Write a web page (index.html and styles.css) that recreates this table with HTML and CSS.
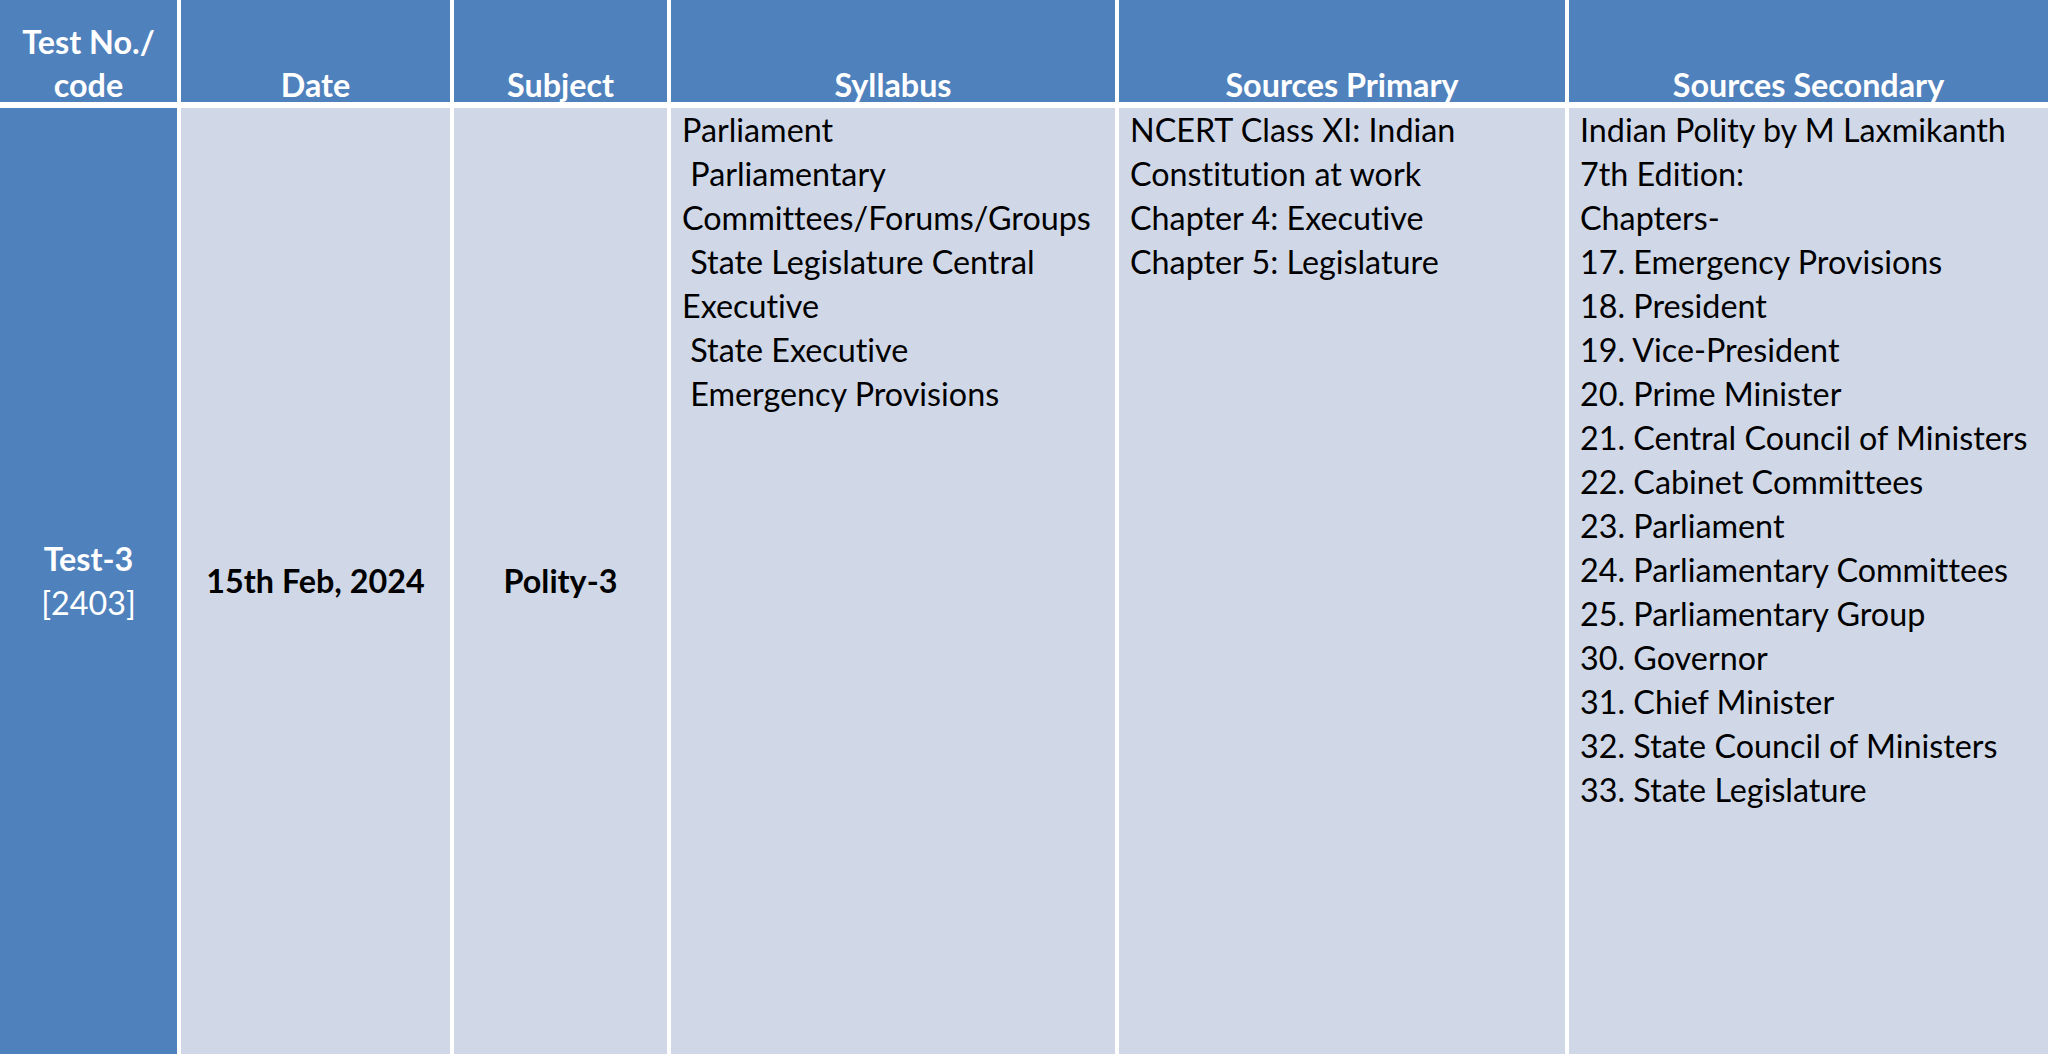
FILE: index.html
```html
<!DOCTYPE html>
<html lang="en">
<head>
<meta charset="utf-8">
<title>Test Schedule</title>
<link rel="stylesheet" href="styles.css">
</head>
<body>
<div class="table">
  <div class="th"><div class="th-text">Test No./<br>code</div></div>
  <div class="th"><div class="th-text">Date</div></div>
  <div class="th"><div class="th-text">Subject</div></div>
  <div class="th"><div class="th-text">Syllabus</div></div>
  <div class="th"><div class="th-text">Sources Primary</div></div>
  <div class="th"><div class="th-text">Sources Secondary</div></div>

  <div class="td td-key"><div><span class="key-b">Test-3</span><br><span class="key-r">[2403]</span></div></div>
  <div class="td td-center"><div>15th Feb, 2024</div></div>
  <div class="td td-center"><div>Polity-3</div></div>
  <div class="td td-list">
    <div class="ln">Parliament</div>
    <div class="ln"> Parliamentary</div>
    <div class="ln">Committees/Forums/Groups</div>
    <div class="ln"> State Legislature Central</div>
    <div class="ln">Executive</div>
    <div class="ln"> State Executive</div>
    <div class="ln"> Emergency Provisions</div>
  </div>
  <div class="td td-list">
    <div class="ln">NCERT Class XI: Indian</div>
    <div class="ln">Constitution at work</div>
    <div class="ln">Chapter 4: Executive</div>
    <div class="ln">Chapter 5: Legislature</div>
  </div>
  <div class="td td-list">
    <div class="ln">Indian Polity by M Laxmikanth</div>
    <div class="ln">7th Edition:</div>
    <div class="ln">Chapters-</div>
    <div class="ln">17. Emergency Provisions</div>
    <div class="ln">18. President</div>
    <div class="ln">19. Vice-President</div>
    <div class="ln">20. Prime Minister</div>
    <div class="ln">21. Central Council of Ministers</div>
    <div class="ln">22. Cabinet Committees</div>
    <div class="ln">23. Parliament</div>
    <div class="ln">24. Parliamentary Committees</div>
    <div class="ln">25. Parliamentary Group</div>
    <div class="ln">30. Governor</div>
    <div class="ln">31. Chief Minister</div>
    <div class="ln">32. State Council of Ministers</div>
    <div class="ln">33. State Legislature</div>
  </div>
</div>
</body>
</html>
```

FILE: styles.css
```css
html, body {
  margin: 0;
  padding: 0;
  background: #ffffff;
}

body {
  font-family: Lato, "Liberation Sans", sans-serif;
  font-variant-ligatures: none;
  width: 2048px;
  height: 1054px;
  overflow: hidden;
}

.table {
  display: grid;
  grid-template-columns: 177px 269px 213px 444px 446px 479px;
  grid-template-rows: 102px 946px;
  column-gap: 4px;
  row-gap: 6px;
  background: #ffffff;
}

.th {
  background: #4f81bd;
  color: #ffffff;
  font-weight: 700;
  font-size: 32.3px;
  line-height: 43px;
  display: flex;
  flex-direction: column;
  justify-content: flex-end;
  align-items: center;
  text-align: center;
}

.th-text {
  margin-bottom: -4px;
}

.td {
  background: #d0d8e8;
  color: #000000;
  font-size: 32.3px;
  line-height: 44px;
}

.td-key {
  background: #4f81bd;
  color: #ffffff;
  display: flex;
  align-items: center;
  justify-content: center;
  text-align: center;
}

.key-b {
  font-weight: 700;
}

.key-r {
  font-weight: 400;
}

.td-center {
  display: flex;
  align-items: center;
  justify-content: center;
  text-align: center;
  font-weight: 700;
}

.td-list {
  padding: 0 0 0 11px;
}

.ln {
  white-space: pre;
}
```
